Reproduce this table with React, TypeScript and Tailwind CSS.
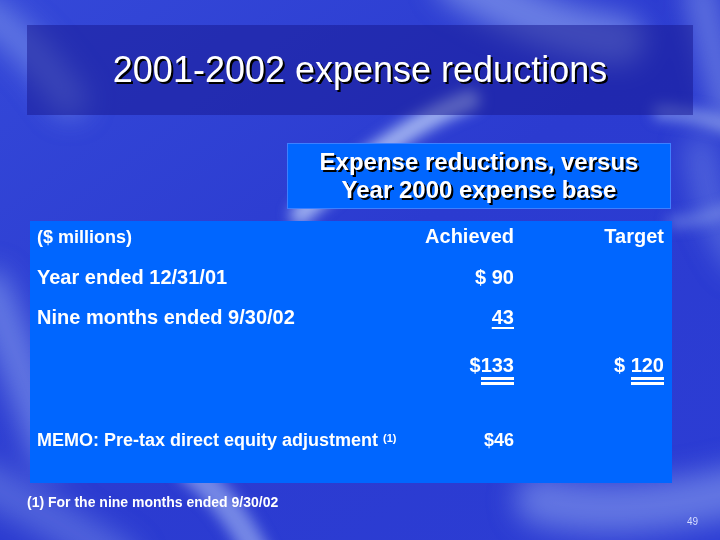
import React from 'react'

const FONT = { fontFamily: '"Liberation Sans", Arial, sans-serif' }

function Backdrop() {
  // soft light streaks of the slide template
  return (
    <svg className="absolute inset-0" width="720" height="540" viewBox="0 0 720 540">
      <defs>
        <linearGradient id="base" x1="0" y1="0" x2="1" y2="1">
          <stop offset="0" stopColor="#3448d8" />
          <stop offset="0.5" stopColor="#2b3bd0" />
          <stop offset="1" stopColor="#2c3dd4" />
        </linearGradient>
        <filter id="soft" x="-50%" y="-50%" width="200%" height="200%">
          <feGaussianBlur stdDeviation="14" />
        </filter>
        <filter id="softer" x="-50%" y="-50%" width="200%" height="200%">
          <feGaussianBlur stdDeviation="7" />
        </filter>
      </defs>
      <rect width="720" height="540" fill="url(#base)" />
      <g filter="url(#soft)" fill="none" strokeLinecap="round">
        <path d="M460 -20 Q540 30 620 40" stroke="#9cb2f2" strokeWidth="50" opacity="0.55" />
        <path d="M700 -10 Q712 50 730 110" stroke="#9cb2f2" strokeWidth="30" opacity="0.5" />
        <path d="M-20 10 Q30 40 70 100" stroke="#90a8f0" strokeWidth="34" opacity="0.5" />
        <path d="M-10 290 Q20 360 50 450" stroke="#90a8f0" strokeWidth="40" opacity="0.55" />
        <path d="M-20 480 Q40 510 120 560" stroke="#8aa2ee" strokeWidth="40" opacity="0.4" />
        <path d="M540 500 Q620 520 740 490" stroke="#9cb2f2" strokeWidth="50" opacity="0.5" />
        <path d="M700 150 Q710 220 740 260" stroke="#8aa2ee" strokeWidth="30" opacity="0.4" />
      </g>
      <g filter="url(#softer)" fill="none" strokeLinecap="round">
        <path d="M470 100 Q400 125 300 215" stroke="#b4c6f6" strokeWidth="20" opacity="0.85" />
        <path d="M660 112 Q700 114 740 130" stroke="#a8bcf4" strokeWidth="14" opacity="0.6" />
        <path d="M190 470 Q230 500 260 560" stroke="#a8bcf4" strokeWidth="26" opacity="0.6" />
        <path d="M672 222 Q700 222 740 205" stroke="#a0b6f2" strokeWidth="10" opacity="0.5" />
      </g>
    </svg>
  )
}

export default function App() {
  return (
    <div className="relative w-[720px] h-[540px] overflow-hidden bg-[#2b3bd0] text-white" style={FONT}>
      <Backdrop />
      <div className="relative flex flex-col">
        {/* Title band */}
        <div className="mt-[25px] mx-[27px] h-[90px] flex items-center justify-center bg-[#16168e]/50">
          <h1 className="text-[36px] leading-[40px] font-normal [text-shadow:2px_2px_0_#000]">
            2001-2002 expense reductions
          </h1>
        </div>

        {/* Subheading box */}
        <div className="mt-[28px] ml-[287px] w-[384px] h-[66px] flex flex-col items-center justify-center bg-[#0066ff] border border-[#3d80ff]">
          <p className="text-[24px] leading-[28px] font-bold [text-shadow:2px_2px_0_#000]">Expense reductions, versus</p>
          <p className="text-[24px] leading-[28px] font-bold [text-shadow:2px_2px_0_#000]">Year 2000 expense base</p>
        </div>

        {/* Table */}
        <div className="mt-[12px] ml-[30px] w-[642px] h-[262px] bg-[#0066ff] pl-[7px] pr-[8px] pt-[3px] font-bold">
          <div className="flex items-baseline leading-[24px]">
            <span className="flex-1 text-[18px]">($ millions)</span>
            <span className="w-[130px] text-right text-[20px]">Achieved</span>
            <span className="w-[150px] text-right text-[20px]">Target</span>
          </div>
          <div className="mt-[16px] flex items-baseline leading-[24px] text-[20px]">
            <span className="flex-1">Year ended 12/31/01</span>
            <span className="w-[130px] text-right">$ 90</span>
            <span className="w-[150px] text-right"></span>
          </div>
          <div className="mt-[16px] flex items-baseline leading-[24px] text-[20px]">
            <span className="flex-1">Nine months ended 9/30/02</span>
            <span className="w-[130px] text-right">
              <span className="underline decoration-2 underline-offset-[3px]">43</span>
            </span>
            <span className="w-[150px] text-right"></span>
          </div>
          <div className="mt-[24px] flex items-baseline leading-[24px] text-[20px]">
            <span className="flex-1"></span>
            <span className="w-[130px] text-right">
              $<span className="inline-block border-b-[8px] border-double border-white">133</span>
            </span>
            <span className="w-[150px] text-right">
              ${' '}<span className="inline-block border-b-[8px] border-double border-white">120</span>
            </span>
          </div>
          <div className="mt-[43px] flex items-baseline leading-[24px] text-[18px]">
            <span className="flex-1 min-w-0 whitespace-nowrap">
              MEMO: Pre-tax direct equity adjustment{' '}
              <sup className="text-[11px] font-bold relative top-[-4px]">(1)</sup>
            </span>
            <span className="w-[130px] text-right">$46</span>
            <span className="w-[150px] text-right"></span>
          </div>
        </div>

        {/* Footnote */}
        <p className="mt-[11px] ml-[27px] text-[14px] leading-[16px] font-bold">
          (1) For the nine months ended 9/30/02
        </p>
        <p className="mt-[6px] pr-[22px] text-right text-[10px] leading-[12px] text-[#d6dcff]">49</p>
      </div>
    </div>
  )
}
